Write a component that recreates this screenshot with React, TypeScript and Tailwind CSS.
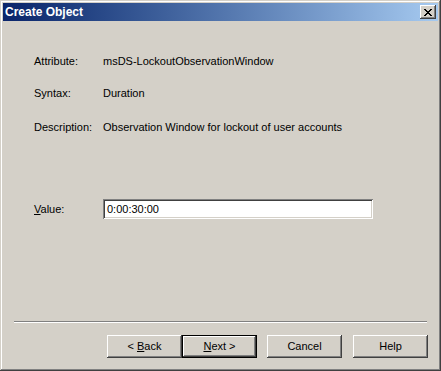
import React from "react"

const font = { fontFamily: '"Liberation Sans", Arial, sans-serif' }

const raised =
    "shadow-[inset_-1px_-1px_#404040,inset_1px_1px_#ffffff,inset_-2px_-2px_#808080,inset_2px_2px_#d4d0c8]"

const Field = ({ label, value }: { label: string; value: string }) => (
    <div className="flex h-[14px] items-center">
        <span className="w-[69px]">{label}</span>
        <span>{value}</span>
    </div>
)

const WinButton = ({ children, isDefault, className }: { children: React.ReactNode; isDefault?: boolean; className?: string }) => {
    if (isDefault) {
        return (
            <div className={`w-[75px] h-[23px] border border-black ${className ?? ""}`}>
                <button className={`w-full h-full bg-[#d4d0c8] text-[11px] text-black ${raised}`}>{children}</button>
            </div>
        )
    }
    return (
        <button className={`w-[75px] h-[23px] bg-[#d4d0c8] text-[11px] text-black ${raised} ${className ?? ""}`}>{children}</button>
    )
}

export default function App() {
    return (
        <div
            style={font}
            className="w-[441px] h-[371px] bg-[#d4d0c8] text-[11px] text-black p-[3px] flex flex-col shadow-[inset_-1px_-1px_#404040,inset_1px_1px_#d4d0c8,inset_-2px_-2px_#808080,inset_2px_2px_#ffffff]"
        >
            <div className="h-[18px] flex items-center justify-between bg-gradient-to-r from-[#0a246a] to-[#a6caf0] pl-[2px] pr-[2px]">
                <span className="text-white font-bold text-[12px]">Create Object</span>
                <button className={`w-[16px] h-[14px] bg-[#d4d0c8] flex items-center justify-center ${raised}`}>
                    <svg width="8" height="7" viewBox="0 0 8 7">
                        <path d="M0 0h2v1h1v1h2v-1h1v-1h2v1h-1v1h-1v1h-1v1h1v1h1v1h1v1h-2v-1h-1v-1h-2v1h-1v1h-2v-1h1v-1h1v-1h1v-1h-1v-1h-1v-1h-1z" fill="#000" />
                    </svg>
                </button>
            </div>

            <div className="flex flex-col pl-[31px] pt-[33px]">
                <Field label="Attribute:" value="msDS-LockoutObservationWindow" />
                <div className="h-[18px]" />
                <Field label="Syntax:" value="Duration" />
                <div className="h-[20px]" />
                <Field label="Description:" value="Observation Window for lockout of user accounts" />
                <div className="mt-[65px] flex items-center h-[20px]">
                    <span className="w-[69px]"><u>V</u>alue:</span>
                    <div className="w-[270px] h-[20px] bg-white flex items-center pl-[4px] shadow-[inset_1px_1px_#808080,inset_-1px_-1px_#ffffff,inset_2px_2px_#404040,inset_-2px_-2px_#d4d0c8]">
                        0:00:30:00
                    </div>
                </div>
            </div>

            <div className="mt-[102px] mx-[11px] h-[2px] border-t border-[#808080] border-b border-b-white" />

            <div className="flex mt-[12px] pl-[104px]">
                <WinButton>&lt; <u>B</u>ack</WinButton>
                <WinButton isDefault><u>N</u>ext &gt;</WinButton>
                <WinButton className="ml-[10px]">Cancel</WinButton>
                <WinButton className="ml-[11px]">Help</WinButton>
            </div>
        </div>
    )
}
